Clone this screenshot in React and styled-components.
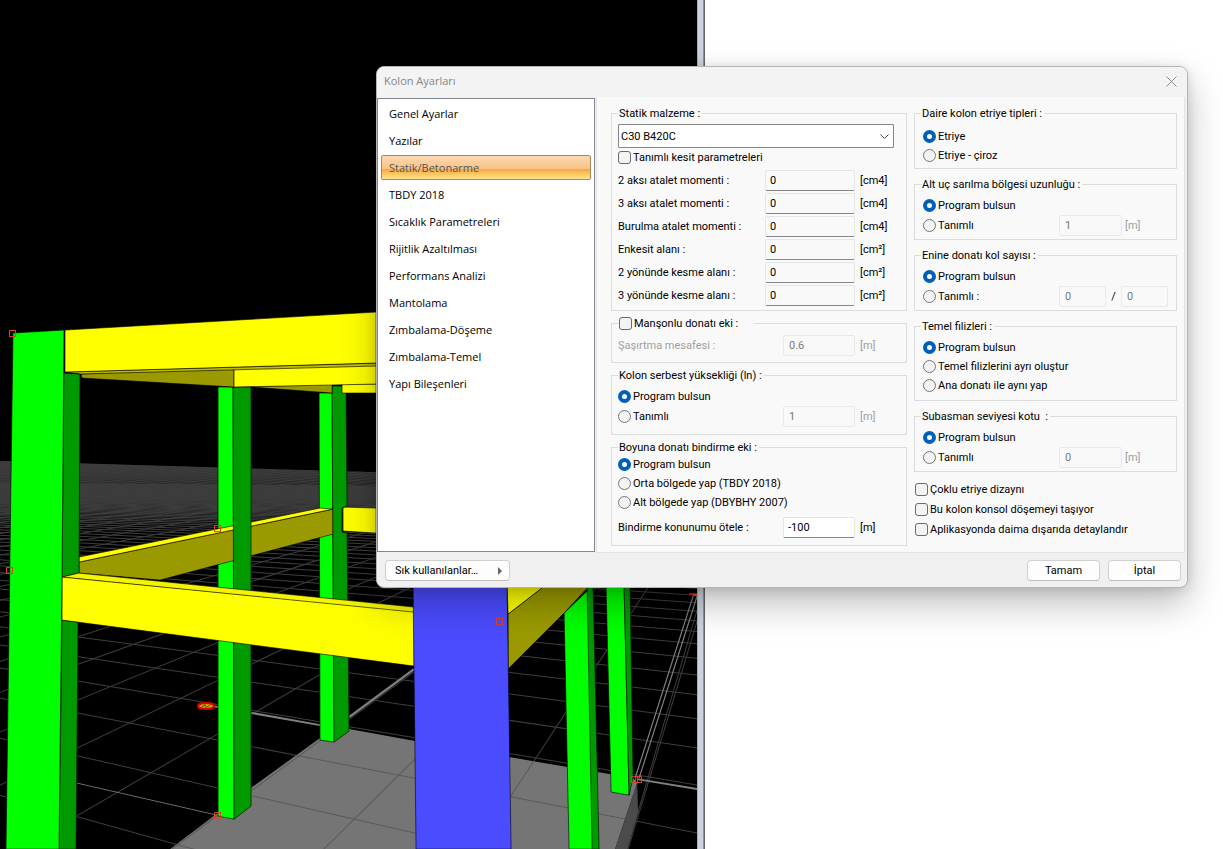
import React, { useState } from 'react'
import styled, { createGlobalStyle, css } from 'styled-components'

const MENU = [
  'Genel Ayarlar',
  'Yazılar',
  'Statik/Betonarme',
  'TBDY 2018',
  'Sıcaklık Parametreleri',
  'Rijitlik Azaltılması',
  'Performans Analizi',
  'Mantolama',
  'Zımbalama-Döşeme',
  'Zımbalama-Temel',
  'Yapı Bileşenleri',
]

const SECTION_FIELDS = [
  ['2 aksı atalet momenti :', '[cm4]'],
  ['3 aksı atalet momenti :', '[cm4]'],
  ['Burulma atalet momenti :', '[cm4]'],
  ['Enkesit alanı :', '[cm²]'],
  ['2 yönünde kesme alanı :', '[cm²]'],
  ['3 yönünde kesme alanı :', '[cm²]'],
]

// floor grid: both line families run to their own vanishing point
const VP_A = { x: -1150, y: 475 }
const VP_B = { x: 758, y: 420 }

const linesA = Array.from({ length: 90 }, (_, i) => {
  const y = 466 + 1 / (0.00225 + i * 0.0006)
  const slope = (y - VP_A.y) / (78 - VP_A.x)
  return { y1: VP_A.y - slope * VP_A.x, y2: VP_A.y + slope * (700 - VP_A.x) }
})

const linesB = Array.from({ length: 60 }, (_, i) => {
  const x = 658 - i * 117
  const t = 1.4
  return { x: VP_B.x + (x - VP_B.x) * t, y: VP_B.y + (750 - VP_B.y) * t }
})

function GridLines({ color }) {
  return (
    <g stroke={color} strokeWidth="1">
      {linesA.map((l, i) => <line key={'a' + i} x1="0" y1={l.y1} x2="700" y2={l.y2} />)}
      {linesB.map((l, i) => <line key={'b' + i} x1={VP_B.x} y1={VP_B.y} x2={l.x} y2={l.y} />)}
      <line x1="697" y1="610" x2="627" y2="849" />
    </g>
  )
}

const NODES = [[12, 333], [9, 570], [217, 528], [217, 815], [499, 621], [634, 779], [638, 779]]

function Scene() {
  return (
    <Canvas viewBox="0 0 697 849" preserveAspectRatio="xMinYMin slice" aria-hidden="true">
      <defs>
        <clipPath id="floor"><path d="M0 461L376 472L697 482V849H0Z" /></clipPath>
        <clipPath id="slab"><path d="M170 849L252 787L320 738L349 729L415 741L509 757L633 778L637 783L615 849Z" /></clipPath>
        <linearGradient id="haze" x1="0" y1="0" x2="0" y2="1">
          <stop offset="0" stopColor="#3c3c3c" />
          <stop offset="0.2" stopColor="#3c3c3c" stopOpacity="0.85" />
          <stop offset="1" stopColor="#3c3c3c" stopOpacity="0" />
        </linearGradient>
      </defs>
      <rect width="697" height="849" fill="#000" />
      <g clipPath="url(#floor)">
        <GridLines color="#3e3e3e" />
        <path d="M0 461L376 472L697 482V530H0Z" fill="url(#haze)" />
      </g>
      <g stroke="#808080" fill="none">
        <path d="M77 783L217 815" />
        <path d="M213 706L320 725M637 779L697 789" strokeWidth="2" />
        <path d="M349 717L414 669" strokeWidth="2.4" />
        <path d="M635 778L693 596M639 778L697 596" strokeWidth="1.2" />
      </g>

      <path d="M170 849L252 787L320 738L349 729L415 741L509 757L633 778L637 783L615 849Z" fill="#757575" />
      <g clipPath="url(#slab)"><GridLines color="#5a5a5a" /></g>
      <path d="M637 783L638 812L627 849H615Z" fill="#4b4b4b" />

      <g stroke="#000" strokeWidth="0.6">
        <path d="M319 393H332L334 742L320 740Z" fill="#0f0" />
        <path d="M218 387H233L234 819L218 816Z" fill="#0f0" />
        <path d="M79 562L333 509V534L160 580L79 573Z" fill="#9a9a00" />
        <path d="M79 557L320 508L333 509L79 562Z" fill="#ff0" />
        <path d="M343 507L376 508V533L343 531Z" fill="#ff0" />
        <path d="M332 386L346 386L347 506L342 508V532L347 533L349 731L334 742Z" fill="#009a00" />
        <path d="M233 387L251 387V806L234 819Z" fill="#009a00" />
        <path d="M252 387L332 384V393Z" fill="#9a9a00" />
        <path d="M342 384H376V393H342Z" fill="#ff0" />
        <path d="M81 374L234 367V387L82 378Z" fill="#9a9a00" />
        <path d="M234 369L376 364V384L234 387Z" fill="#ff0" />
        <path d="M65 372L376 363V366L80 374Z" fill="#bcbc00" />
        <path d="M65 330L376 312V363L65 372Z" fill="#ff0" />
        <path d="M64 373L80 374L79 573L62 577Z" fill="#009a00" />
        <path d="M62 620L78 622L76 849H59Z" fill="#009a00" />
        <path d="M62 577L79 573L414 607V613Z" fill="#f4f400" />
        <path d="M62 577L414 612V666L62 620Z" fill="#ff0" />
        <path d="M13 333L64 330L62 577L59 849H6Z" fill="#0f0" />
        <path d="M564 613L588 590L597 849H569Z" fill="#0f0" />
        <path d="M587 587H593L599 849H592Z" fill="#009a00" />
        <path d="M606 587H624L629 795L611 792Z" fill="#0f0" />
        <path d="M624 587H630L633 777L629 795Z" fill="#009a00" />
        <path d="M508 614L543 587H588L564 613L508 669Z" fill="#9a9a00" />
        <path d="M507 587H543L508 614Z" fill="#ff0" />
        <path d="M413 587H507L511 849H416Z" fill="#4b4bff" />
      </g>

      <g fill="none" stroke="#d8452c">
        {NODES.map(([x, y]) => <rect key={x + '-' + y} x={x - 2.5} y={y - 2.5} width="6" height="6" />)}
      </g>
      <ellipse cx="206" cy="706" rx="8" ry="3" fill="#c8b400" stroke="#e00000" strokeWidth="2" />
      <path d="M202 707L205 704.5L206 707.5L210 705" stroke="#6b4a00" fill="none" />
      <path d="M689 594H697" stroke="#e01010" strokeWidth="2" />
      <path d="M693 595H697" stroke="#c8b400" />
    </Canvas>
  )
}

function Choice({ type = 'radio', name, children, ...rest }) {
  return (
    <ChoiceLabel>
      {type === 'radio' ? <Radio name={name} {...rest} /> : <Check {...rest} />}
      {children}
    </ChoiceLabel>
  )
}

function App() {
  const [active, setActive] = useState('Statik/Betonarme')

  return (
    <Desktop>
      <GlobalStyle />
      <Viewport>
        <Scene />
      </Viewport>
      <Splitter />

      <Dialog role="dialog" aria-labelledby="dialog-title">
        <TitleBar>
          <h1 id="dialog-title">Kolon Ayarları</h1>
          <CloseButton aria-label="Kapat">
            <svg width="11" height="11" viewBox="0 0 11 11"><path d="M0.5 0.5L10.5 10.5M10.5 0.5L0.5 10.5" stroke="#8c8c8c" fill="none" /></svg>
          </CloseButton>
        </TitleBar>

        <Body>
          <Menu>
            {MENU.map(item => (
              <MenuItem key={item} $active={item === active} onClick={() => setActive(item)}>{item}</MenuItem>
            ))}
          </Menu>

          <Panel>
            <Column $gap={5}>
              <Group $top={3} $bottom={4}>
                <legend>Statik malzeme :</legend>
                <SelectBox>
                  <select aria-label="Statik malzeme" defaultValue="C30 B420C">
                    <option>C30 B420C</option>
                  </select>
                  <svg width="9" height="5" viewBox="0 0 9 5"><path d="M0.5 0.5L4.5 4.5L8.5 0.5" stroke="#444" fill="none" /></svg>
                </SelectBox>
                <Choice type="checkbox">Tanımlı kesit parametreleri</Choice>
                <Fields $top={3}>
                  {SECTION_FIELDS.map(([label, unit], i) => (
                    <FieldRow key={label} $cols="147px 90px 1fr">
                      <label htmlFor={'section-' + i}>{label}</label>
                      <Input id={'section-' + i} defaultValue="0" readOnly />
                      <Unit>{unit}</Unit>
                    </FieldRow>
                  ))}
                </Fields>
              </Group>

              <Group $top={4} $bottom={6} $wide>
                <legend><Choice type="checkbox">Manşonlu donatı eki :</Choice></legend>
                <FieldRow $cols="165px 72px 1fr" $off>
                  <label htmlFor="stagger">Şaşırtma mesafesi :</label>
                  <Input id="stagger" defaultValue="0.6" disabled />
                  <Unit>[m]</Unit>
                </FieldRow>
              </Group>

              <Group $top={4} $bottom={9}>
                <legend>Kolon serbest yüksekliği (ln) :</legend>
                <Choice name="free" defaultChecked>Program bulsun</Choice>
                <ChoiceRow $cols="165px 72px 1fr">
                  <Choice name="free">Tanımlı</Choice>
                  <Input aria-label="Kolon serbest yüksekliği" defaultValue="1" disabled />
                  <Unit $off>[m]</Unit>
                </ChoiceRow>
              </Group>

              <Group $top={0} $bottom={7}>
                <legend>Boyuna donatı bindirme eki :</legend>
                <Choice name="lap" defaultChecked>Program bulsun</Choice>
                <Choice name="lap">Orta bölgede yap (TBDY 2018)</Choice>
                <Choice name="lap">Alt bölgede yap (DBYBHY 2007)</Choice>
                <Fields $top={5}>
                  <FieldRow $cols="165px 72px 1fr">
                    <label htmlFor="offset">Bindirme konunumu ötele :</label>
                    <Input id="offset" defaultValue="-100" $filled />
                    <Unit>[m]</Unit>
                  </FieldRow>
                </Fields>
              </Group>
            </Column>

            <Column $gap={8}>
              <Group $top={6} $bottom={3} $inset={8}>
                <legend>Daire kolon etriye tipleri :</legend>
                <Choice name="circle" defaultChecked>Etriye</Choice>
                <Choice name="circle">Etriye - çiroz</Choice>
              </Group>

              <Group $top={4} $bottom={5} $inset={8}>
                <legend>Alt uç sarılma bölgesi uzunluğu :</legend>
                <Choice name="wrap" defaultChecked>Program bulsun</Choice>
                <ChoiceRow $cols="136px 63px 1fr">
                  <Choice name="wrap">Tanımlı</Choice>
                  <Input aria-label="Alt uç sarılma bölgesi uzunluğu" defaultValue="1" disabled />
                  <Unit $off $tight>[m]</Unit>
                </ChoiceRow>
              </Group>

              <Group $top={4} $bottom={5} $inset={8}>
                <legend>Enine donatı kol sayısı :</legend>
                <Choice name="legs" defaultChecked>Program bulsun</Choice>
                <ChoiceRow $cols="136px 47px 15px 47px">
                  <Choice name="legs">Tanımlı :</Choice>
                  <Input aria-label="Kol sayısı 2 yönü" defaultValue="0" disabled />
                  <Slash>/</Slash>
                  <Input aria-label="Kol sayısı 3 yönü" defaultValue="0" disabled />
                </ChoiceRow>
              </Group>

              <Group $top={4} $bottom={5} $inset={8}>
                <legend>Temel filizleri :</legend>
                <Choice name="dowel" defaultChecked>Program bulsun</Choice>
                <Choice name="dowel">Temel filizlerini ayrı oluştur</Choice>
                <Choice name="dowel">Ana donatı ile aynı yap</Choice>
              </Group>

              <Group $top={4} $bottom={5} $inset={8}>
                <legend>Subasman seviyesi kotu &nbsp;:</legend>
                <Choice name="level" defaultChecked>Program bulsun</Choice>
                <ChoiceRow $cols="136px 63px 1fr">
                  <Choice name="level">Tanımlı</Choice>
                  <Input aria-label="Subasman seviyesi kotu" defaultValue="0" disabled />
                  <Unit $off $tight>[m]</Unit>
                </ChoiceRow>
              </Group>

              <Options>
                <Choice type="checkbox">Çoklu etriye dizaynı</Choice>
                <Choice type="checkbox">Bu kolon konsol döşemeyi taşıyor</Choice>
                <Choice type="checkbox">Aplikasyonda daima dışarıda detaylandır</Choice>
              </Options>
            </Column>
          </Panel>
        </Body>

        <Footer>
          <Button $menu>
            Sık kullanılanlar…
            <svg width="4" height="8" viewBox="0 0 4 8"><path d="M0 0L4 4L0 8Z" fill="#666" /></svg>
          </Button>
          <Button>Tamam</Button>
          <Button>İptal</Button>
        </Footer>
      </Dialog>
    </Desktop>
  )
}

export default App

const GlobalStyle = createGlobalStyle`
*{
  box-sizing: border-box;
}
body{
  margin: 0;
  background: white;
  color: #000;
  font: 11px/15px Roboto, "Liberation Sans", sans-serif;
}
button, input, select{
  font: inherit;
  color: inherit;
  margin: 0;
}
`

const Desktop = styled.main`
position: relative;
display: flex;
height: 100vh;
overflow: hidden;
`

const Viewport = styled.div`
width: 57%;
background: black;
`

const Canvas = styled.svg`
display: block;
width: 100%;
height: 100%;
`

const Splitter = styled.div`
width: 8px;
background: #cdd3de;
border-left: 1px solid #a9adb6;
border-right: 1px solid #666;
box-shadow: inset -1px 0 #8e929b;
`

const Dialog = styled.section`
position: absolute;
left: 376px;
top: 66px;
width: 812px;
border: 1px solid #b4b4b4;
border-radius: 8px;
background: #f0f0f0;
box-shadow: 0 16px 36px rgba(0, 0, 0, 0.26), 0 2px 12px rgba(0, 0, 0, 0.12);
overflow: hidden;
`

const TitleBar = styled.header`
display: flex;
align-items: center;
justify-content: space-between;
height: 30px;
padding: 0 10px 2px 7px;
background: #f3f3f3;
h1{
  margin: 0;
  color: #868686;
  font: 11px/16px "Open Sans", "Noto Sans", sans-serif;
}
`

const CloseButton = styled.button`
display: flex;
padding: 0;
border: none;
background: none;
`

const Body = styled.div`
display: flex;
padding-right: 2px;
`

const Menu = styled.nav`
display: flex;
flex-direction: column;
gap: 2px;
width: 218px;
margin: 1px 1px 1px 0;
padding: 2px 3px;
border: 1px solid #828790;
background: white;
`

const MenuItem = styled.button`
height: 25px;
padding: 0 7px;
border: 1px solid transparent;
border-radius: 2px;
background: none;
text-align: left;
font: 11px/16px "Open Sans", "Noto Sans", sans-serif;
${p => p.$active && css`
  border-color: #a58a5c;
  background: linear-gradient(#fbd9b4, #f9c384 55%, #f5a541 56%, #fbc965 80%, #ffe292);
  color: #555;
`}
`

const Panel = styled.div`
display: grid;
grid-template-columns: 1fr 263px;
gap: 7px;
flex: 1;
padding: 9px 7px 6px 14px;
border: 1px solid #e3e3e3;
border-top: none;
background: #f9f9f9;
`

const Column = styled.div`
display: flex;
flex-direction: column;
gap: ${p => p.$gap}px;
`

const Group = styled.fieldset`
display: flex;
flex-direction: column;
min-width: 0;
margin: 0;
padding: ${p => `${p.$top}px 6px ${p.$bottom}px ${p.$inset || 6}px`};
border: 1px solid #dcdcdc;
legend{
  width: ${p => p.$wide ? '136px' : 'auto'};
  height: 15px;
  margin-left: ${p => 6 - (p.$inset || 6)}px;
  padding: 0 2px 0 1px;
  white-space: pre;
}
legend label{
  height: 15px;
}
`

const ChoiceLabel = styled.label`
display: flex;
align-items: center;
gap: 2px;
height: 19px;
white-space: nowrap;
`

const Radio = styled.input.attrs({ type: 'radio' })`
appearance: none;
flex: none;
width: 13px;
height: 13px;
border: 1px solid #767676;
border-radius: 50%;
background: #f3f3f3;
&:checked{
  border: 4px solid #005fb8;
  background: white;
}
`

const Check = styled.input.attrs({ type: 'checkbox' })`
appearance: none;
flex: none;
width: 13px;
height: 13px;
border: 1px solid #6b6b6b;
border-radius: 3px;
background: #f3f3f3;
&:checked{
  background: #005fb8;
}
`

const SelectBox = styled.div`
display: flex;
align-items: center;
position: relative;
margin-right: 6px;
select{
  appearance: none;
  width: 100%;
  height: 24px;
  padding: 0 20px 0 2px;
  border: 1px solid #868686;
  border-radius: 1px;
  background: white;
}
svg{
  position: absolute;
  right: 5px;
  pointer-events: none;
}
`

const Fields = styled.div`
display: flex;
flex-direction: column;
gap: 2px;
padding-top: ${p => p.$top}px;
`

const FieldRow = styled.div`
display: grid;
grid-template-columns: ${p => p.$cols};
align-items: center;
color: ${p => p.$off ? '#a0a0a0' : 'inherit'};
`

const ChoiceRow = styled(FieldRow)`
height: 19px;
`

const Input = styled.input`
width: 100%;
height: 21px;
padding: 0 4px 1px;
border: 1px solid #e5e5e5;
border-bottom-color: #868686;
border-radius: 2px;
background: ${p => p.$filled ? 'white' : '#f9f9f9'};
&:disabled{
  padding-left: 5px;
  border-color: #e9e9e9;
  color: #7a7a7a;
}
`

const Unit = styled.span`
padding-left: ${p => p.$tight ? 3 : 5}px;
color: ${p => p.$off ? '#a0a0a0' : 'inherit'};
`

const Slash = styled.span`
text-align: center;
`

const Options = styled.div`
display: flex;
flex-direction: column;
gap: 1px;
padding-left: 1px;
`

const Footer = styled.footer`
display: flex;
gap: 8px;
padding: 7px 6px 6px 8px;
`

const Button = styled.button`
display: flex;
align-items: center;
justify-content: center;
width: 73px;
height: 21px;
padding: 0;
border: 1px solid #d0d0d0;
border-bottom-color: #bdbdbd;
border-radius: 4px;
background: #fdfdfd;
${p => p.$menu && css`
  justify-content: space-between;
  width: 125px;
  margin-right: auto;
  padding: 0 7px 0 9px;
`}
`
